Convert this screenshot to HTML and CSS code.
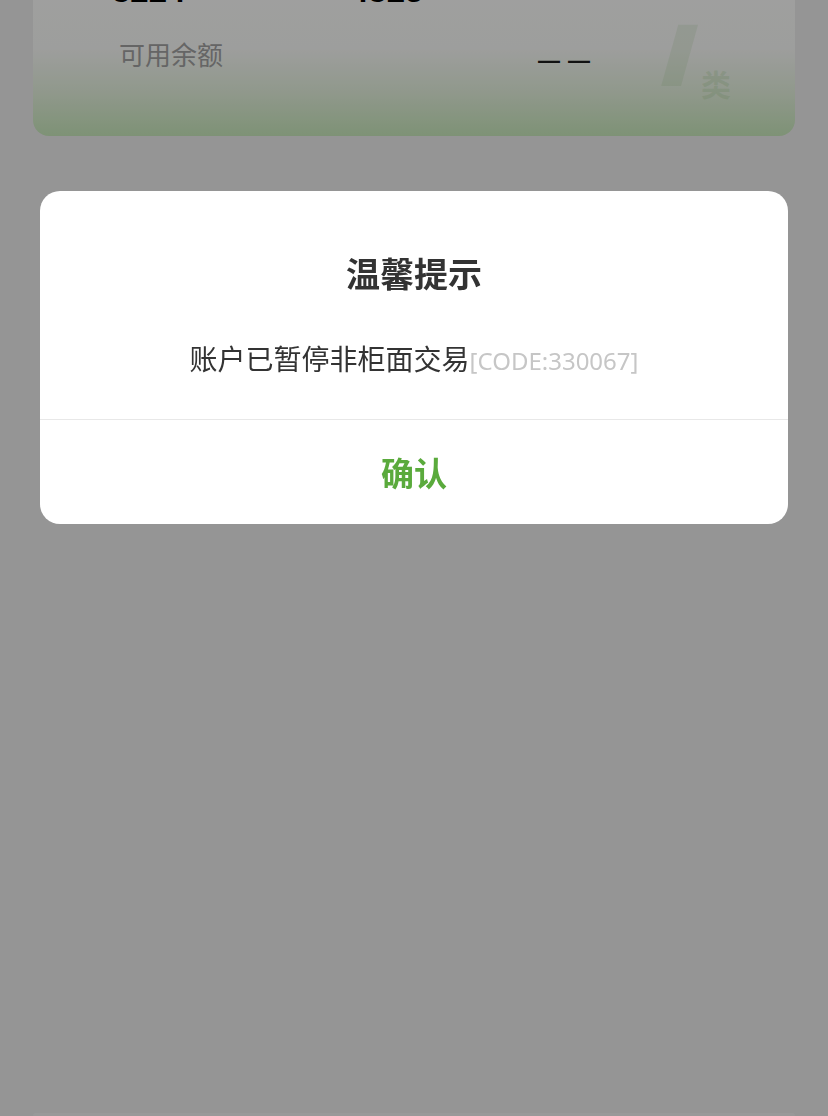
FILE: index.html
```html
<!DOCTYPE html>
<html lang="zh-CN">
<head>
<meta charset="UTF-8" />
<title>账户</title>
<link rel="stylesheet" href="styles.css">
</head>
<body>

<div class="page">
  <div class="card">
    <div class="card-no">
      <span>3224</span>
      <span>4325</span>
    </div>
    <div class="balance">
      <span class="balance-label">可用余额</span>
      <span class="balance-value">——</span>
    </div>
    <div class="card-mark"><span class="mark-big">I</span><span class="mark-small">类</span></div>
  </div>
  <div class="bottom-bar"></div>
</div>

<div class="mask">
  <div class="dialog">
    <div class="dialog-title">温馨提示</div>
    <div class="dialog-msg">账户已暂停非柜面交易<span class="dialog-code">[CODE:330067]</span></div>
    <div class="dialog-btn">确认</div>
  </div>
</div>

</body>
</html>
```

FILE: styles.css
```css
html, body {
  margin: 0;
  height: 100%;
}
body {
  font-family: "Noto Sans CJK SC", "Noto Sans", sans-serif;
  background: #eeeeee;
  color: #222;
  overflow: hidden;
}
.page {
  height: 100%;
  display: flex;
  flex-direction: column;
  padding: 0 33px;
  box-sizing: border-box;
}
.card {
  position: relative;
  margin-top: -46px;
  height: 182px;
  border-radius: 16px;
  background: linear-gradient(180deg, #ffffff 0%, #fbfcfa 52%, #e6f3df 76%, #c9e9bc 100%);
  overflow: hidden;
}
.card-no {
  display: flex;
  padding: 18px 0 0 79px;
  font-family: "Liberation Sans", "Noto Sans", sans-serif;
  font-size: 33px;
  font-weight: 700;
  line-height: 38px;
  color: #000;
}
.card-no span {
  width: 238px;
}
.balance {
  display: flex;
  align-items: center;
  padding: 22px 0 0 86px;
}
.balance-label {
  width: 419px;
  font-size: 26px;
  color: #a2a2a2;
}
.balance-value {
  font-family: "Liberation Sans", sans-serif;
  font-size: 22px;
  font-weight: 700;
  letter-spacing: 8px;
  color: #1d1d1d;
  padding-top: 16px;
}
.card-mark {
  position: absolute;
  right: 64px;
  top: 68px;
  display: flex;
  align-items: flex-end;
  color: rgba(150, 200, 130, 0.16);
}
.mark-big {
  font-family: "DejaVu Sans", sans-serif;
  font-size: 84px;
  font-weight: 700;
  font-style: italic;
  line-height: 70px;
  transform: skewX(-2deg) scaleX(1.25);
}
.mark-small {
  font-size: 30px;
  font-weight: 700;
  line-height: 30px;
  margin-left: 6px;
  margin-bottom: -6px;
  color: rgba(150, 200, 130, 0.22);
}
.bottom-bar {
  margin-top: auto;
  height: 3px;
  border-radius: 8px 8px 0 0;
  background: #f4f4f4;
}
.mask {
  position: fixed;
  inset: 0;
  background: rgba(0, 0, 0, 0.373);
  display: flex;
  flex-direction: column;
  align-items: center;
}
.dialog {
  margin-top: 191px;
  width: 748px;
  background: #fff;
  border-radius: 20px;
  text-align: center;
  overflow: hidden;
}
.dialog-title {
  padding-top: 58px;
  font-size: 34px;
  line-height: 48px;
  font-weight: 700;
  color: #333;
}
.dialog-msg {
  margin-top: 41px;
  padding-bottom: 41px;
  font-size: 28px;
  line-height: 40px;
  color: #333;
  border-bottom: 1px solid #e8e8e8;
}
.dialog-code {
  font-family: "Noto Sans", sans-serif;
  font-size: 24px;
  line-height: 0;
  color: #c6c6c6;
}
.dialog-btn {
  height: 104px;
  line-height: 104px;
  font-size: 33px;
  font-weight: 700;
  color: #5aaa3c;
}
```
